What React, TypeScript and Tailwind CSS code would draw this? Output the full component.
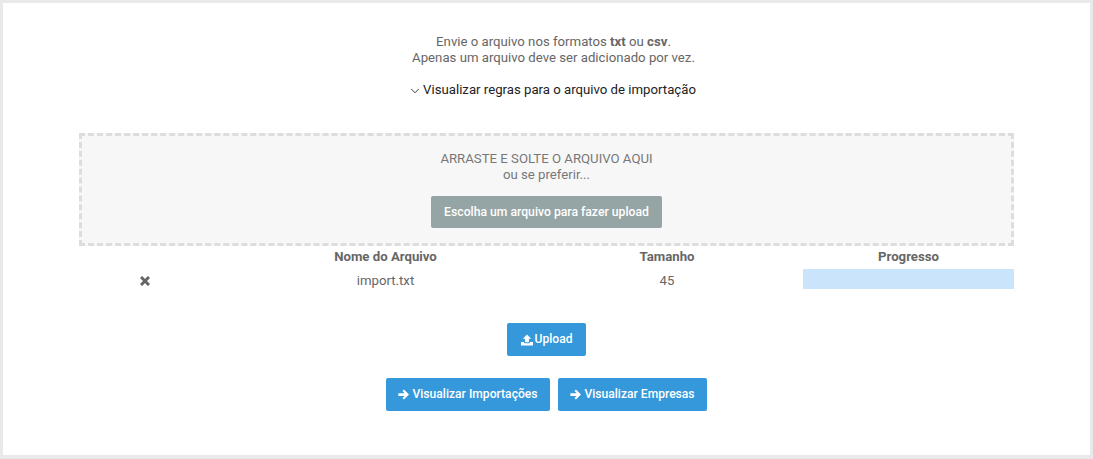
import { FiChevronDown } from 'react-icons/fi';

const btn =
  'flex items-center justify-center h-[33px] rounded-[2px] bg-[#3498db] text-white text-[12.1px] font-medium';

function ArrowIcon() {
  return (
    <svg className="h-[11px] w-[11px]" viewBox="0 0 12 12" fill="currentColor">
      <path d="M6.5 .6 12 6l-5.5 5.4-1.6-1.6 2.4-2.3H.4v-3h6.9L4.9 2.2z" />
    </svg>
  );
}

function UploadIcon() {
  return (
    <svg className="h-[12px] w-[12px]" viewBox="0 0 12 12" fill="currentColor">
      <path d="M6 .4 10.2 4.8H7.9V8.2H4.1V4.8H1.8z" />
      <path d="M0 8H3.2V9.2H8.8V8H12V11.6H0z" />
    </svg>
  );
}

function RemoveIcon() {
  return (
    <svg className="h-[10px] w-[10px] text-[#666]" viewBox="0 0 10 10" stroke="currentColor" strokeWidth="3">
      <path d="M1 1 9 9M9 1 1 9" />
    </svg>
  );
}

export default function App() {
  return (
    <div className="h-[459px] w-[1093px] overflow-hidden bg-[#e9e9e9] pt-[3px] pl-[3px] pr-[3px] pb-[4px] font-['Roboto',sans-serif] text-[#666]">
      <div className="h-full bg-white px-[76px] pt-[31px]">
        <div className="pl-[14px] text-center text-[13.2px] leading-[16px]">
          <p>
            Envie o arquivo nos formatos <b>txt</b> ou <b>csv</b>.
          </p>
          <p>Apenas um arquivo deve ser adicionado por vez.</p>
        </div>

        <div className="mt-[16px] flex h-[16px] items-center justify-center pl-[11px] text-[13.2px] text-[#222]">
          <FiChevronDown className="mr-[1px] mt-[1px] h-[14px] w-[14px] stroke-[1.5]" />
          Visualizar regras para o arquivo de importação
        </div>

        <div className="mt-[35px] flex h-[113px] flex-col items-center border-[3px] border-dashed border-[#ddd] bg-[#f7f7f7] pt-[15px] text-[13.2px] leading-[16px] text-[#777]">
          <p>ARRASTE E SOLTE O ARQUIVO AQUI</p>
          <p>ou se preferir...</p>
          <button className="mt-[13px] h-[32px] w-[231px] rounded-[2px] bg-[#95a5a6] text-[12.2px] font-medium text-white">
            Escolha um arquivo para fazer upload
          </button>
        </div>

        <div className="grid grid-cols-[131px_351px_212px_30px_211px] text-center text-[13.2px]">
          <div />
          <div className="h-[23px] pt-[3px] font-bold leading-[16px]">Nome do Arquivo</div>
          <div className="h-[23px] pt-[3px] font-bold leading-[16px]">Tamanho</div>
          <div />
          <div className="h-[23px] pt-[3px] font-bold leading-[16px]">Progresso</div>

          <div className="flex h-[20px] items-center justify-center pt-[4px]">
            <RemoveIcon />
          </div>
          <div className="h-[20px] leading-[24px]">import.txt</div>
          <div className="h-[20px] leading-[24px]">45</div>
          <div />
          <div className="h-[20px] bg-[#c9e4fb]" />
        </div>

        <div className="mt-[34px] flex justify-center">
          <button className={`${btn} w-[79px] gap-[2px]`}>
            <UploadIcon />
            Upload
          </button>
        </div>

        <div className="mt-[22px] flex justify-center gap-[8px]">
          <button className={`${btn} w-[164px] gap-[3px]`}>
            <ArrowIcon />
            Visualizar Importações
          </button>
          <button className={`${btn} w-[149px] gap-[3px]`}>
            <ArrowIcon />
            Visualizar Empresas
          </button>
        </div>
      </div>
    </div>
  );
}
